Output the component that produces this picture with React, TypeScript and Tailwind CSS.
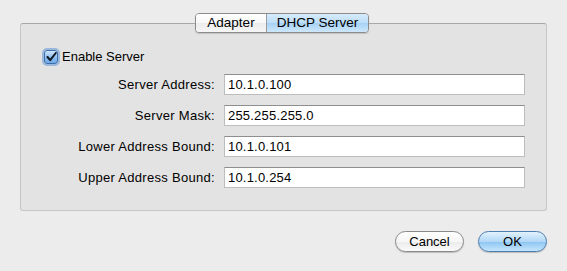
import React from 'react';

const rows = [
  { label: 'Server Address:', value: '10.1.0.100' },
  { label: 'Server Mask:', value: '255.255.255.0' },
  { label: 'Lower Address Bound:', value: '10.1.0.101' },
  { label: 'Upper Address Bound:', value: '10.1.0.254' },
];

export default function App() {
  return (
    <div
      className="w-[567px] h-[271px] bg-[#ececec] text-[13px] text-black overflow-hidden"
      style={{ fontFamily: '"Liberation Sans", Arial, sans-serif' }}
    >
      <div className="pt-[13px] px-[20px]">
        {/* tab switcher */}
        <div className="relative z-10 flex justify-center pr-[3px]">
          <div className="flex h-[20px] rounded-[4px] border border-[#8c8c8c] overflow-hidden shadow-[0_1px_1px_rgba(0,0,0,0.15)]">
            <div className="w-[71px] flex items-center justify-center bg-[linear-gradient(180deg,#ffffff_0%,#f7f7f7_50%,#ececec_51%,#f6f6f6_100%)] border-r border-[#9a9a9a] text-[13.5px]">
              Adapter
            </div>
            <div className="w-[101px] flex items-center justify-center bg-[linear-gradient(180deg,#d6ebfc_0%,#bcddf8_50%,#a6d1f5_51%,#cde7fb_100%)] text-[13.5px]">
              DHCP Server
            </div>
          </div>
        </div>

        {/* group box */}
        <div className="-mt-[10px] h-[188px] rounded-[3px] bg-[#e3e3e3] border border-[#c6c6c6] border-t-[#a9a9a9] pt-[26px] pl-[23px] pr-[21px]">
          <div className="flex items-center gap-[4px] h-[14px]">
            <div className="w-[14px] h-[14px] rounded-[3px] border border-[#3f6fa8] bg-[linear-gradient(180deg,#cfe5fa_0%,#8fbef0_55%,#6ea9ea_100%)] shadow-[0_0_0_2px_rgba(96,148,215,0.55)] flex items-center justify-center">
              <svg width="11" height="10" viewBox="0 0 11 10">
                <path d="M1.5 5 L4.2 8.2 L9.8 1" fill="none" stroke="#101820" strokeWidth="2" strokeLinecap="round" strokeLinejoin="round" />
              </svg>
            </div>
            <span>Enable Server</span>
          </div>

          <div className="mt-[10px] flex flex-col gap-[10px]">
            {rows.map((r) => (
              <div key={r.label} className="flex items-center h-[21px]">
                <div className="w-[180px] text-right pr-[9px] tracking-[0.3px]">{r.label}</div>
                <div className="w-[301px] h-[21px] bg-white border border-[#bdbdbd] border-t-[#8e8e8e] flex items-center pl-[3px] tracking-[0.2px]">
                  {r.value}
                </div>
              </div>
            ))}
          </div>
        </div>

        {/* buttons */}
        <div className="mt-[20px] flex justify-end gap-[14px]">
          <button className="w-[69px] h-[21px] rounded-full border border-[#8a8a8a] bg-[linear-gradient(180deg,#ffffff_0%,#f6f6f6_50%,#ebebeb_51%,#fafafa_100%)] shadow-[0_1px_1px_rgba(0,0,0,0.2)] flex items-center justify-center">
            Cancel
          </button>
          <button className="w-[69px] h-[21px] rounded-full border border-[#4d7cae] bg-[linear-gradient(180deg,#e2f1fd_0%,#b1d8f7_50%,#8cc5f2_51%,#c5e5fb_100%)] shadow-[0_1px_1px_rgba(0,0,0,0.2)] flex items-center justify-center">
            OK
          </button>
        </div>
      </div>
    </div>
  );
}
